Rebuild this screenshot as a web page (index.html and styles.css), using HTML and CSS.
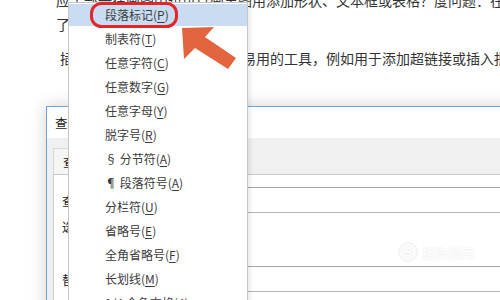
FILE: index.html
```html
<!DOCTYPE html>
<html lang="zh-CN">
<head>
    <meta charset="UTF-8">
    <title>查找和替换 - 特殊格式</title>
    <link rel="stylesheet" href="styles.css">
</head>
<body>
    <div class="doc">
        <p class="line l1">应主部一在画图中也可以画出图用添加形状、文本框或表格？度问题：在工具栏</p>
        <p class="line l2">了新的在画图中也可以画出了<span class="ret">↵</span></p>
        <p class="line l3">插入选项卡提供了一些非常容易用的工具，例如用于添加超链接或插入批注</p>
    </div>

    <div class="dialog">
        <div class="dlg-title">查找和替换</div>
        <div class="tabs">
            <span class="tab">查找(<u>D</u>)</span>
            <span class="tab active">替换(<u>P</u>)</span>
            <span class="tab">定位(<u>G</u>)</span>
        </div>
        <div class="panel">
            <div class="row">
                <span class="label">查找内容(<u>N</u>):</span>
                <div class="input"></div>
            </div>
            <div class="opt">选项:　　区分全/半角</div>
            <div class="row">
                <span class="label">替换为(<u>I</u>):</span>
                <div class="input"></div>
            </div>
        </div>
    </div>

    <ul class="menu">
        <li class="item hl">段落标记(<u>P</u>)</li>
        <li class="item">制表符(<u>T</u>)</li>
        <li class="item">任意字符(<u>C</u>)</li>
        <li class="item">任意数字(<u>G</u>)</li>
        <li class="item">任意字母(<u>Y</u>)</li>
        <li class="item">脱字号(<u>R</u>)</li>
        <li class="item">§ 分节符(<u>A</u>)</li>
        <li class="item">¶ 段落符号(<u>A</u>)</li>
        <li class="item">分栏符(<u>U</u>)</li>
        <li class="item">省略号(<u>E</u>)</li>
        <li class="item">全角省略号(<u>F</u>)</li>
        <li class="item">长划线(<u>M</u>)</li>
        <li class="item">1/4 全角空格(<u>4</u>)</li>
    </ul>

    <!-- 标注：红框 + 箭头 -->
    <svg class="marks" width="500" height="300" viewBox="0 0 500 300">
        <rect x="91.5" y="3.5" width="85" height="23" rx="10" fill="none" stroke="#e2262b" stroke-width="3"/>
        <polygon points="182,28 214,27 205,37 236,58 228,69 195,48 184,59" fill="#e2653f"/>
    </svg>

    <div class="watermark">
        <span class="wm-logo">S</span>
        <span class="wm-text">搜狗指南</span>
    </div>
</body>
</html>
```

FILE: styles.css
```css
body {
    margin: 0;
    width: 500px;
    height: 300px;
    overflow: hidden;
    position: relative;
    background: #fff;
    font-family: "Noto Sans CJK SC", "Liberation Sans", sans-serif;
}
.doc {
    margin-top: -11px;
    padding-left: 56px;
    font-size: 14px;
    color: #333;
}
.line {
    margin: 0;
    line-height: 22px;
    white-space: nowrap;
}
.l2 {
    margin-top: 2px;
}
.l3 {
    margin-top: 11px;
    text-indent: 4px;
}
.ret {
    font-size: 11px;
    color: #999;
    margin-left: 2px;
}
.dialog {
    position: absolute;
    left: 46px;
    top: 106px;
    width: 560px;
    height: 300px;
    border: 1px solid #6fa3dc;
    background: #f0f0f0;
    box-shadow: 0 0 16px rgba(0, 0, 0, 0.18);
    font-size: 12.5px;
    color: #222;
}
.dlg-title {
    height: 31px;
    line-height: 31px;
    padding-left: 8px;
    background: #fff;
}
.tabs {
    display: flex;
    padding: 10px 0 0 6px;
}
.tab {
    height: 25px;
    line-height: 25px;
    padding: 0 9px;
    border: 1px solid #d9d9d9;
    border-bottom: none;
    background: #f5f5f5;
}
.tab.active {
    background: #fff;
}
.panel {
    margin-left: 6px;
    padding: 12px 0 0 8px;
    background: #fff;
    border-top: 1px solid #c8c8c8;
    border-left: 1px solid #cfcfcf;
    height: 200px;
}
.row {
    display: flex;
    align-items: center;
}
.label {
    width: 80px;
}
.input {
    flex: 1;
    height: 24px;
    border: 1px solid #b5b5b5;
    border-top-color: #a6a6a6;
    background: #fff;
}
.opt {
    line-height: 28px;
    margin-bottom: 25px;
}
.menu {
    position: absolute;
    left: 68px;
    top: 2px;
    width: 180px;
    box-sizing: border-box;
    margin: 0;
    padding: 0;
    list-style: none;
    background: #fff;
    border: 1px solid #c6c6c6;
    box-shadow: 3px 3px 3px rgba(0, 0, 0, 0.07);
    font-size: 12px;
    color: #3c3c3c;
}
.item {
    height: 24px;
    line-height: 24px;
    padding-left: 36px;
    white-space: nowrap;
}
.item.hl {
    height: 22px;
    line-height: 22px;
    margin: 1px 0;
    background: #c9dcf2;
}
u {
    text-underline-offset: 2px;
}
.marks {
    position: absolute;
    left: 0;
    top: 0;
}
.watermark {
    position: absolute;
    left: 398px;
    top: 242px;
    display: flex;
    align-items: center;
    gap: 4px;
    color: #fff;
}
.wm-logo {
    width: 18px;
    height: 18px;
    border-radius: 50%;
    border: 1px solid #efefef;
    background: #fafafa;
    text-align: center;
    line-height: 18px;
    font-size: 13px;
    font-weight: bold;
    text-shadow: 0 0 2px rgba(0, 0, 0, 0.12);
}
.wm-text {
    font-size: 13px;
    text-shadow: 0 0 2px rgba(0, 0, 0, 0.12);
}
```
